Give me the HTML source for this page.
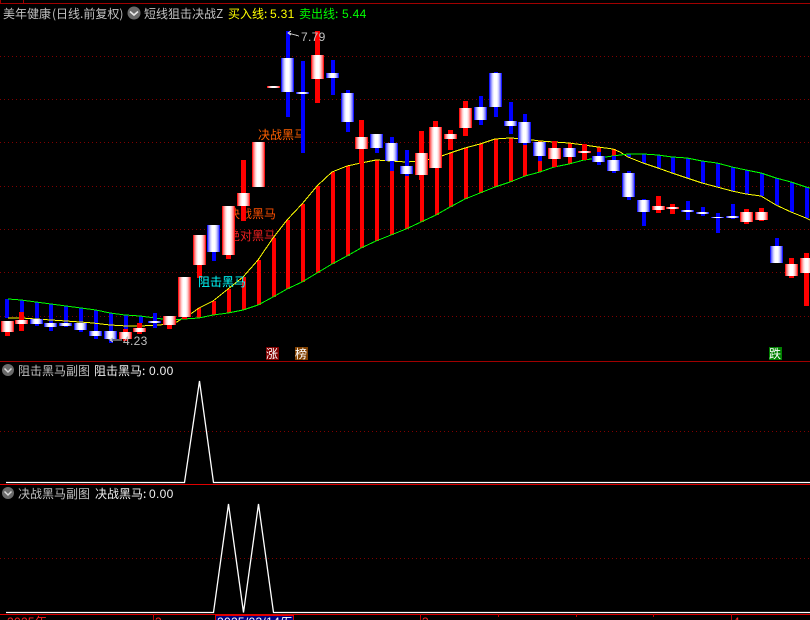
<!DOCTYPE html>
<html><head><meta charset="utf-8"><style>
html,body{margin:0;padding:0;background:#000;width:810px;height:620px;overflow:hidden}
svg{position:absolute;left:0;top:0;display:block}
text{font-family:"WenQuanYi Zen Hei","Noto Sans CJK SC","Liberation Sans",sans-serif;font-size:12px}
.n{font-family:"Liberation Sans",sans-serif;font-size:12px;letter-spacing:.3px}
g.w4 rect{width:4px}
</style></head><body>
<svg width="810" height="620" viewBox="0 0 810 620" xmlns="http://www.w3.org/2000/svg">
<defs>
<linearGradient id="r" x1="0" x2="1" y1="0" y2="0">
<stop offset="0" stop-color="#ff1818"/><stop offset=".077" stop-color="#ff1818"/><stop offset=".077" stop-color="#ff6c6c"/><stop offset=".154" stop-color="#ff6c6c"/><stop offset=".154" stop-color="#ffa0a0"/><stop offset=".231" stop-color="#ffa0a0"/><stop offset=".231" stop-color="#ffd0d0"/><stop offset=".308" stop-color="#ffd0d0"/><stop offset=".308" stop-color="#ffeeee"/><stop offset=".385" stop-color="#ffeeee"/><stop offset=".385" stop-color="#fff"/><stop offset=".615" stop-color="#fff"/><stop offset=".615" stop-color="#ffeeee"/><stop offset=".692" stop-color="#ffeeee"/><stop offset=".692" stop-color="#ffd0d0"/><stop offset=".769" stop-color="#ffd0d0"/><stop offset=".769" stop-color="#ffa0a0"/><stop offset=".846" stop-color="#ffa0a0"/><stop offset=".846" stop-color="#ff6c6c"/><stop offset=".923" stop-color="#ff6c6c"/><stop offset=".923" stop-color="#ff1818"/><stop offset="1" stop-color="#ff1818"/>
</linearGradient>
<linearGradient id="b" x1="0" x2="1" y1="0" y2="0">
<stop offset="0" stop-color="#1818ff"/><stop offset=".077" stop-color="#1818ff"/><stop offset=".077" stop-color="#6c6cff"/><stop offset=".154" stop-color="#6c6cff"/><stop offset=".154" stop-color="#a0a0ff"/><stop offset=".231" stop-color="#a0a0ff"/><stop offset=".231" stop-color="#d0d0ff"/><stop offset=".308" stop-color="#d0d0ff"/><stop offset=".308" stop-color="#eeeeff"/><stop offset=".385" stop-color="#eeeeff"/><stop offset=".385" stop-color="#fff"/><stop offset=".615" stop-color="#fff"/><stop offset=".615" stop-color="#eeeeff"/><stop offset=".692" stop-color="#eeeeff"/><stop offset=".692" stop-color="#d0d0ff"/><stop offset=".769" stop-color="#d0d0ff"/><stop offset=".769" stop-color="#a0a0ff"/><stop offset=".846" stop-color="#a0a0ff"/><stop offset=".846" stop-color="#6c6cff"/><stop offset=".923" stop-color="#6c6cff"/><stop offset=".923" stop-color="#1818ff"/><stop offset="1" stop-color="#1818ff"/>
</linearGradient>
</defs>

<rect width="810" height="620" fill="#000"/>

<!-- frame lines -->
<g fill="#a00000" shape-rendering="crispEdges">
<rect x="0" y="3" width="810" height="1"/>
<rect x="0" y="0" width="1" height="3"/>
<rect x="23" y="0" width="1" height="3"/>
<rect x="0" y="361" width="810" height="1"/>
</g>

<!-- dotted grid -->
<g stroke="#800000" stroke-width="1" stroke-dasharray="1 3" shape-rendering="crispEdges">
<line x1="0" x2="810" y1="56.5" y2="56.5"/>
<line x1="0" x2="810" y1="99.5" y2="99.5"/>
<line x1="0" x2="810" y1="142.5" y2="142.5"/>
<line x1="0" x2="810" y1="186.5" y2="186.5"/>
<line x1="0" x2="810" y1="229.5" y2="229.5"/>
<line x1="0" x2="810" y1="272.5" y2="272.5"/>
<line x1="0" x2="810" y1="316.5" y2="316.5"/>
<line x1="0" x2="810" y1="431.5" y2="431.5"/>
<line x1="0" x2="810" y1="558.5" y2="558.5"/>
</g>

<!-- indicator labels behind candles -->
<text x="258" y="139" fill="#ff6000">决战黑马</text>
<text x="228" y="218" fill="#ff5000">决战黑马</text>
<text x="228" y="240" fill="#f02020">绝对黑马</text>

<!-- red bands -->
<g class="w4" fill="#f00" shape-rendering="crispEdges">
<rect x="197" y="308" width="3" height="10"/><rect x="212" y="301" width="3" height="14"/><rect x="227" y="289" width="3" height="24"/><rect x="242" y="277" width="3" height="33"/><rect x="257" y="260" width="3" height="45"/><rect x="272" y="238" width="3" height="59"/><rect x="286" y="220" width="3" height="69"/><rect x="301" y="204" width="3" height="78"/><rect x="316" y="186" width="3" height="87"/><rect x="331" y="172" width="3" height="92"/><rect x="346" y="166" width="3" height="90"/><rect x="360" y="163" width="3" height="85"/><rect x="375" y="160" width="3" height="81"/><rect x="390" y="161" width="3" height="74"/><rect x="405" y="162" width="3" height="67"/><rect x="420" y="161" width="3" height="61"/><rect x="435" y="158" width="3" height="57"/><rect x="449" y="153" width="3" height="54"/><rect x="464" y="148" width="3" height="51"/><rect x="479" y="144" width="3" height="49"/><rect x="494" y="139" width="3" height="48"/><rect x="509" y="138" width="3" height="44"/><rect x="523" y="139" width="3" height="37"/><rect x="538" y="141" width="3" height="31"/><rect x="553" y="142" width="3" height="25"/><rect x="568" y="143" width="3" height="21"/><rect x="583" y="145" width="3" height="15"/><rect x="597" y="147" width="3" height="11"/><rect x="612" y="149" width="3" height="7"/>
</g>
<!-- blue bands -->
<g class="w4" fill="#00f" shape-rendering="crispEdges">
<rect x="5" y="299" width="3" height="19"/><rect x="20" y="300" width="3" height="12"/><rect x="35" y="302" width="3" height="17"/><rect x="49" y="304" width="3" height="19"/><rect x="64" y="306" width="3" height="17"/><rect x="79" y="308" width="3" height="15"/><rect x="94" y="310" width="3" height="19"/><rect x="109" y="313" width="3" height="18"/><rect x="124" y="315" width="3" height="14"/><rect x="139" y="316" width="3" height="7"/><rect x="153" y="313" width="3" height="15"/>
<rect x="627" y="154" width="3" height="3"/><rect x="642" y="154" width="3" height="9"/><rect x="657" y="155" width="3" height="13"/><rect x="671" y="157" width="3" height="16"/><rect x="686" y="158" width="3" height="20"/><rect x="701" y="161" width="3" height="22"/><rect x="716" y="163" width="3" height="24"/><rect x="731" y="167" width="3" height="24"/><rect x="745" y="170" width="3" height="24"/><rect x="760" y="173" width="3" height="23"/><rect x="775" y="178" width="3" height="27"/><rect x="790" y="182" width="3" height="30"/><rect x="805" y="187" width="3" height="31"/>
</g>

<!-- yellow / green lines -->
<polyline fill="none" stroke="#ffff00" stroke-width="1" shape-rendering="crispEdges" points="8,318 22,318 36,319 51,320 66,321 80,322 93,323 110,325 127,326 140,326 160,325 177,322 184,317 192,313 199,308 213,301 228,289 243,277 258,260 273,238 287,220 302,204 317,186 332,172 347,166 361,163 376,160 391,161 406,162 421,161 436,158 450,153 465,148 480,144 495,139 510,138 525,139 540,141 554,142 569,143 584,145 598,147 613,149 620,152 628,157 643,163 658,168 672,173 687,178 702,183 717,187 732,191 746,194 761,196 776,205 791,212 806,218 810,220"/>
<polyline fill="none" stroke="#00ff00" stroke-width="1" shape-rendering="crispEdges" points="8,299 21,300 36,302 51,304 66,306 81,308 96,310 110,313 125,315 140,316 155,318 170,320 184,319 199,318 213,315 228,313 243,310 258,305 273,297 287,289 302,282 317,273 332,264 347,256 361,248 376,241 391,235 406,229 421,222 436,215 450,207 465,199 480,193 495,187 510,182 525,176 540,172 554,167 569,164 584,160 598,158 613,156 628,154 643,154 658,155 672,157 687,158 702,161 717,163 732,167 746,170 761,173 776,178 791,182 806,187 810,188"/>

<!-- red wicks -->
<g fill="#f00" shape-rendering="crispEdges">
<rect x="5" y="321" width="5" height="15"/><rect x="19" y="312" width="5" height="19"/><rect x="123" y="329" width="5" height="12"/><rect x="137" y="323" width="5" height="11"/><rect x="167" y="316" width="5" height="13"/><rect x="182" y="277" width="5" height="42"/><rect x="197" y="235" width="5" height="43"/><rect x="226" y="206" width="5" height="53"/><rect x="241" y="160" width="5" height="61"/><rect x="256" y="142" width="5" height="45"/><rect x="315" y="31" width="5" height="72"/><rect x="359" y="120" width="5" height="44"/><rect x="419" y="131" width="5" height="49"/><rect x="433" y="121" width="5" height="47"/><rect x="448" y="130" width="5" height="20"/><rect x="463" y="101" width="5" height="35"/><rect x="552" y="141" width="5" height="26"/><rect x="582" y="144" width="5" height="16"/><rect x="656" y="196" width="5" height="17"/><rect x="670" y="204" width="5" height="10"/><rect x="744" y="209" width="5" height="15"/><rect x="759" y="208" width="5" height="13"/><rect x="789" y="258" width="5" height="20"/><rect x="804" y="253" width="5" height="53"/>
</g>
<!-- blue wicks -->
<g class="w4" fill="#00f" shape-rendering="crispEdges">
<rect x="35" y="319" width="3" height="7"/><rect x="49" y="323" width="3" height="8"/><rect x="64" y="323" width="3" height="4"/><rect x="79" y="323" width="3" height="9"/><rect x="94" y="329" width="3" height="10"/><rect x="109" y="331" width="3" height="12"/><rect x="153" y="313" width="3" height="15"/><rect x="212" y="225" width="3" height="36"/><rect x="286" y="31" width="3" height="86"/><rect x="301" y="61" width="3" height="92"/><rect x="331" y="60" width="3" height="35"/><rect x="346" y="90" width="3" height="42"/><rect x="375" y="134" width="3" height="19"/><rect x="390" y="137" width="3" height="34"/><rect x="405" y="150" width="3" height="26"/><rect x="479" y="96" width="3" height="29"/><rect x="494" y="72" width="3" height="45"/><rect x="509" y="102" width="3" height="32"/><rect x="523" y="114" width="3" height="31"/><rect x="538" y="142" width="3" height="19"/><rect x="568" y="148" width="3" height="9"/><rect x="597" y="152" width="3" height="13"/><rect x="612" y="156" width="3" height="17"/><rect x="627" y="171" width="3" height="29"/><rect x="642" y="199" width="3" height="27"/><rect x="686" y="201" width="3" height="19"/><rect x="701" y="207" width="3" height="9"/><rect x="716" y="213" width="3" height="20"/><rect x="731" y="204" width="3" height="15"/><rect x="775" y="238" width="3" height="25"/>
</g>

<!-- red bodies -->
<g fill="url(#r)">
<rect x="1" y="321" width="13" height="11"/><rect x="15" y="320" width="13" height="4"/><rect x="119" y="332" width="13" height="7"/><rect x="133" y="328" width="13" height="4"/><rect x="163" y="316" width="13" height="9"/><rect x="178" y="277" width="13" height="40"/><rect x="193" y="235" width="13" height="30"/><rect x="222" y="206" width="13" height="49"/><rect x="237" y="193" width="13" height="13"/><rect x="252" y="142" width="13" height="45"/><rect x="267" y="86" width="13" height="2"/><rect x="311" y="55" width="13" height="24"/><rect x="355" y="137" width="13" height="12"/><rect x="415" y="153" width="13" height="22"/><rect x="429" y="127" width="13" height="41"/><rect x="444" y="134" width="13" height="5"/><rect x="459" y="108" width="13" height="20"/><rect x="548" y="148" width="13" height="11"/><rect x="578" y="151" width="13" height="2"/><rect x="652" y="206" width="13" height="4"/><rect x="666" y="207" width="13" height="2"/><rect x="740" y="212" width="13" height="10"/><rect x="755" y="212" width="13" height="8"/><rect x="785" y="264" width="13" height="12"/><rect x="800" y="258" width="13" height="15"/>
</g>
<!-- blue bodies -->
<g fill="url(#b)">
<rect x="30" y="319" width="13" height="5"/><rect x="44" y="323" width="13" height="4"/><rect x="59" y="323" width="13" height="3"/><rect x="74" y="323" width="13" height="7"/><rect x="89" y="331" width="13" height="5"/><rect x="104" y="331" width="13" height="8"/><rect x="148" y="321" width="13" height="2"/><rect x="207" y="225" width="13" height="27"/><rect x="281" y="58" width="13" height="34"/><rect x="296" y="92" width="13" height="2"/><rect x="326" y="73" width="13" height="5"/><rect x="341" y="93" width="13" height="29"/><rect x="370" y="134" width="13" height="14"/><rect x="385" y="143" width="13" height="18"/><rect x="400" y="166" width="13" height="8"/><rect x="474" y="107" width="13" height="13"/><rect x="489" y="73" width="13" height="34"/><rect x="504" y="121" width="13" height="5"/><rect x="518" y="122" width="13" height="21"/><rect x="533" y="142" width="13" height="14"/><rect x="563" y="148" width="13" height="9"/><rect x="592" y="156" width="13" height="6"/><rect x="607" y="160" width="13" height="11"/><rect x="622" y="173" width="13" height="24"/><rect x="637" y="200" width="13" height="12"/><rect x="681" y="210" width="13" height="2"/><rect x="696" y="212" width="13" height="2"/><rect x="711" y="217" width="13" height="1"/><rect x="726" y="216" width="13" height="2"/><rect x="770" y="246" width="13" height="17"/>
</g>

<!-- cyan label -->
<text x="198" y="286" fill="#00ffff">阻击黑马</text>

<!-- high / low markers -->
<polyline points="291,31 288,33 291,35 288,33 299,36" fill="none" stroke="#c0c0c0" stroke-width="1" shape-rendering="crispEdges"/>
<text class="n" x="301" y="41" fill="#c0c0c0">7.79</text>
<polyline points="113,338 110,340 113,342 110,340 122,340" fill="none" stroke="#c0c0c0" stroke-width="1" shape-rendering="crispEdges"/>
<text class="n" x="123" y="345" fill="#c0c0c0">4.23</text>

<!-- badges -->
<rect x="266" y="347" width="13" height="13" fill="#800000"/>
<text x="266" y="358" fill="#fff" style="font-size:12px">涨</text>
<rect x="295" y="347" width="13" height="13" fill="#804000"/>
<text x="295" y="358" fill="#fff" style="font-size:12px">榜</text>
<rect x="769" y="347" width="13" height="13" fill="#008000"/>
<text x="769" y="358" fill="#fff" style="font-size:12px">跌</text>

<!-- header -->
<text x="3" y="18" fill="#c0c0c0">美年健康</text>
<text x="52" y="18" fill="#c0c0c0">(日线.前复权)</text>
<circle cx="134" cy="13" r="6.5" fill="#6a6a6a"/>
<polyline points="130,11.5 134,15 138,11.5" fill="none" stroke="#e8e8e8" stroke-width="1.6"/>
<text x="144" y="18" fill="#c0c0c0">短线狙击决战Z</text>
<text x="228" y="18" fill="#ffff00">买入线:</text>
<text class="n" x="270" y="18" fill="#ffff00">5.31</text>
<text x="299" y="18" fill="#00ff00">卖出线:</text>
<text class="n" x="342" y="18" fill="#00ff00">5.44</text>

<!-- panel 2 -->
<circle cx="8" cy="370" r="6" fill="#6a6a6a"/>
<polyline points="4.5,368.5 8,372 11.5,368.5" fill="none" stroke="#d8d8d8" stroke-width="1.5"/>
<text x="18" y="375" fill="#c0c0c0">阻击黑马副图</text>
<text x="94" y="375" fill="#f0f0f0">阻击黑马:</text>
<text class="n" x="149" y="375" fill="#f0f0f0">0.00</text>
<polyline points="6,482.5 184.5,482.5 199.5,381 213.5,482.5 810,482.5" fill="none" stroke="#fff" stroke-width="1.3"/>
<rect x="0" y="484" width="810" height="1" fill="#e00000" shape-rendering="crispEdges"/>

<!-- panel 3 -->
<circle cx="8" cy="493" r="6" fill="#6a6a6a"/>
<polyline points="4.5,491.5 8,495 11.5,491.5" fill="none" stroke="#d8d8d8" stroke-width="1.5"/>
<text x="18" y="498" fill="#c0c0c0">决战黑马副图</text>
<text x="95" y="498" fill="#f0f0f0">决战黑马:</text>
<text class="n" x="149" y="498" fill="#f0f0f0">0.00</text>
<polyline points="6,612.5 213.5,612.5 228.5,504 243.5,612.5 258.5,504 273.5,612.5 810,612.5" fill="none" stroke="#fff" stroke-width="1.3"/>
<rect x="0" y="614" width="810" height="1" fill="#e00000" shape-rendering="crispEdges"/>

<!-- time axis -->
<g fill="#c00000" shape-rendering="crispEdges">
<rect x="153" y="614" width="1" height="6"/><rect x="420" y="614" width="1" height="6"/><rect x="731" y="614" width="1" height="6"/>
<rect x="498" y="614" width="1" height="3"/><rect x="576" y="614" width="1" height="3"/><rect x="653" y="614" width="1" height="3"/>
</g>
<text class="n" x="7" y="626" fill="#ff2020">2025</text>
<text x="35" y="626" fill="#ff2020">年</text>
<text class="n" x="155" y="626" fill="#ff2020">3</text>
<text class="n" x="422" y="626" fill="#ff2020">3</text>
<text class="n" x="733" y="626" fill="#ff2020">4</text>
<rect x="215.5" y="615.5" width="78" height="10" fill="#000080" stroke="#e00000" shape-rendering="crispEdges"/>
<text class="n" x="217" y="626" fill="#fff">2025/03/14/</text>
<text x="281" y="626" fill="#fff">五</text>
</svg>
</body></html>
